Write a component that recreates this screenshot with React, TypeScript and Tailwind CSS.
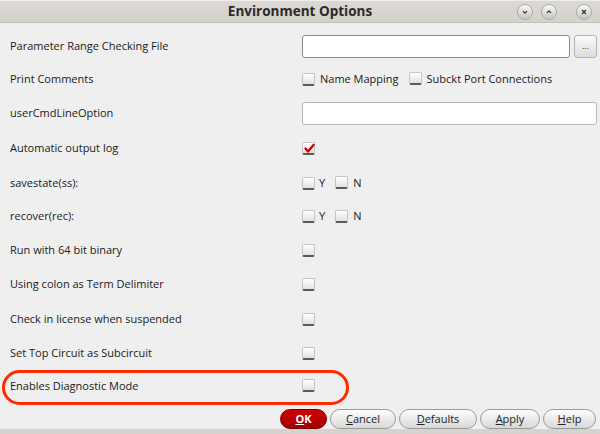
import React from "react";

const font = { fontFamily: '"Open Sans", "Noto Sans", sans-serif' };

function Box({ checked = false }: { checked?: boolean }) {
  return (
    <span className="relative inline-block w-[13px] h-[13px] rounded-[2px] border border-[#c4c4c4] border-b-2 border-b-[#5a5a5a] bg-gradient-to-b from-[#ffffff] to-[#e2e2e2] shrink-0">
      {checked && (
        <svg viewBox="0 0 13 13" className="absolute left-[0px] top-[-1px] w-[13px] h-[13px]">
          <path d="M2.5 6.5 L5 9.5 L10.5 3" stroke="#d40000" strokeWidth="2.3" fill="none" strokeLinecap="round" strokeLinejoin="round" />
        </svg>
      )}
    </span>
  );
}

function Row({ h, label, children }: { h: string; label: string; children?: React.ReactNode }) {
  return (
    <div className={`flex items-center ${h}`}>
      <div className="w-[302px] pl-[10px] text-[11px] text-[#1a1a1a]">{label}</div>
      <div className="flex items-center">{children}</div>
    </div>
  );
}

function Btn({ children, w }: { children: React.ReactNode; w: string }) {
  return (
    <div className={`${w} h-[20px] rounded-full border border-[#9a9a9a] bg-gradient-to-b from-[#fdfdfd] to-[#d8d8d8] flex items-center justify-center text-[11px] text-[#222]`}>
      {children}
    </div>
  );
}

function TitleBtn({ children }: { children: React.ReactNode }) {
  return (
    <div className="w-[16px] h-[16px] rounded-full bg-gradient-to-b from-[#fafafa] to-[#c4c4c4] border border-[#b0aca8] flex items-center justify-center">
      {children}
    </div>
  );
}

export default function App() {
  return (
    <div className="w-[600px] h-[434px] bg-[#efefef] flex flex-col overflow-hidden" style={font}>
      <div className="h-[23px] bg-gradient-to-b from-[#dcd8d4] to-[#d4d0cc] border-t border-[#f0eeec] border-b border-b-[#c4c0bc] relative flex items-center justify-center">
        <span className="text-[13.5px] font-bold text-[#2a2a2a]">Environment Options</span>
        <div className="absolute right-[8px] top-[3px] flex items-center">
          <TitleBtn>
            <svg viewBox="0 0 10 10" className="w-[8px] h-[8px]"><path d="M2.5 4 L5 6.5 L7.5 4" stroke="#333" strokeWidth="1.5" fill="none" /></svg>
          </TitleBtn>
          <div className="w-[8px]" />
          <TitleBtn>
            <svg viewBox="0 0 10 10" className="w-[8px] h-[8px]"><path d="M2.5 6 L5 3.5 L7.5 6" stroke="#333" strokeWidth="1.5" fill="none" /></svg>
          </TitleBtn>
          <div className="w-[19px]" />
          <TitleBtn>
            <svg viewBox="0 0 10 10" className="w-[8px] h-[8px]"><path d="M2.5 2.5 L7.5 7.5 M7.5 2.5 L2.5 7.5" stroke="#333" strokeWidth="1.5" fill="none" /></svg>
          </TitleBtn>
        </div>
      </div>
      <div className="h-[6px]" />
      <Row h="h-[34px]" label="Parameter Range Checking File">
        <div className="w-[268px] h-[23px] bg-white border border-[#8c8c8c] rounded-[3px]" />
        <div className="ml-[4px] w-[23px] h-[23px] rounded-[3px] border border-[#b4b4b4] bg-gradient-to-b from-[#fafafa] to-[#dcdcdc] flex items-center justify-center text-[9px] text-[#333] leading-none pb-[2px]">...</div>
      </Row>
      <Row h="h-[32px]" label="Print Comments">
        <Box />
        <span className="ml-[5px] text-[11px] text-[#1a1a1a]">Name Mapping</span>
        <span className="ml-[10px]"><Box /></span>
        <span className="ml-[5px] text-[11px] text-[#1a1a1a]">Subckt Port Connections</span>
      </Row>
      <Row h="h-[36px]" label="userCmdLineOption">
        <div className="w-[295px] h-[23px] bg-white border border-[#b8b8b8] rounded-[3px]" />
      </Row>
      <Row h="h-[35px]" label="Automatic output log">
        <Box checked />
      </Row>
      <Row h="h-[34px]" label="savestate(ss):">
        <Box />
        <span className="ml-[4px] text-[11px] text-[#1a1a1a]">Y</span>
        <span className="ml-[10px]"><Box /></span>
        <span className="ml-[5px] text-[11px] text-[#1a1a1a]">N</span>
      </Row>
      <Row h="h-[33px]" label="recover(rec):">
        <Box />
        <span className="ml-[4px] text-[11px] text-[#1a1a1a]">Y</span>
        <span className="ml-[10px]"><Box /></span>
        <span className="ml-[5px] text-[11px] text-[#1a1a1a]">N</span>
      </Row>
      <Row h="h-[34px]" label="Run with 64 bit binary"><Box /></Row>
      <Row h="h-[35px]" label="Using colon as Term Delimiter"><Box /></Row>
      <Row h="h-[34px]" label="Check in license when suspended"><Box /></Row>
      <Row h="h-[34px]" label="Set Top Circuit as Subcircuit"><Box /></Row>
      <div className="ml-[2px] w-[347px] h-[35px] border-[3px] border-[#ff2a00] rounded-full flex items-center">
        <div className="w-[297px] pl-[5px] text-[11px] text-[#1a1a1a] mt-[-3px]">Enables Diagnostic Mode</div>
        <span className="mt-[-4px]"><Box /></span>
      </div>
      <div className="flex items-center justify-end pr-[4px] mt-[4px] gap-[3px]">
        <div className="w-[47px] h-[20px] rounded-full border border-[#7a0000] bg-gradient-to-b from-[#d40000] to-[#a00000] flex items-center justify-center text-[11px] font-bold text-white">
          <span><span className="underline">O</span>K</span>
        </div>
        <Btn w="w-[66px]"><span><span className="underline">C</span>ancel</span></Btn>
        <Btn w="w-[78px]"><span><span className="underline">D</span>efaults</span></Btn>
        <Btn w="w-[60px]"><span><span className="underline">A</span>pply</span></Btn>
        <Btn w="w-[53px]"><span><span className="underline">H</span>elp</span></Btn>
      </div>
      <div className="flex-1" />
      <div className="h-[5px] bg-[#d6d2ce]" />
    </div>
  );
}
